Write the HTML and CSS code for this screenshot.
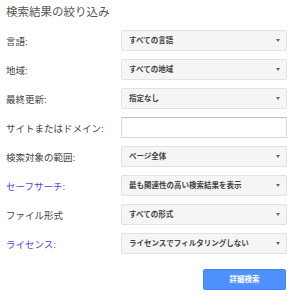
FILE: index.html
```html
<html>
<head>
<meta charset="utf-8">
<link rel="stylesheet" href="styles.css">
<title>検索結果の絞り込み</title>
</head>
<body>
<div class=panel>
<div class=title>検索結果の絞り込み</div>
<div class=rows>
<div class=row><div class=lbl>言語:</div><div class=sel>すべての言語<span class=arr></span></div></div>
<div class=row><div class=lbl>地域:</div><div class=sel>すべての地域<span class=arr></span></div></div>
<div class=row><div class=lbl>最終更新:</div><div class=sel>指定なし<span class=arr></span></div></div>
<div class=row><div class=lbl>サイトまたはドメイン:</div><div class=inp></div></div>
<div class=row><div class=lbl>検索対象の範囲:</div><div class=sel>ページ全体<span class=arr></span></div></div>
<div class=row><div class="lbl link">セーフサーチ:</div><div class=sel>最も関連性の高い検索結果を表示<span class=arr></span></div></div>
<div class=row><div class=lbl>ファイル形式</div><div class=sel>すべての形式<span class=arr></span></div></div>
<div class=row><div class="lbl link">ライセンス:</div><div class=sel>ライセンスでフィルタリングしない<span class=arr></span></div></div>
</div>
<div class=foot><div class=btn>詳細検索</div></div>
</div>
</body>
</html>
```

FILE: styles.css
```css
html,body{margin:0;background:#fff}
body{font-family:Arial,"Liberation Sans","Noto Sans CJK JP",sans-serif;color:#444}
.panel{padding:6px 12px 0 6px}
.title{font-size:11.5px;color:#555;height:24px;line-height:13px}
.rows{display:flex;flex-direction:column;gap:8px}
.row{display:flex;align-items:center;height:21px}
.lbl{flex:none;width:115px;font-size:9.5px;color:#444}
.link{color:#4646e6}
.sel{flex:none;position:relative;box-sizing:border-box;width:166px;height:21px;padding-left:7px;line-height:19px;
background:#f5f5f5;border:1px solid #e2e2e2;border-radius:2px;font-size:7.5px;font-weight:bold;color:#444;white-space:nowrap}
.arr{position:absolute;right:6px;top:8px;border-left:2.5px solid transparent;border-right:2.5px solid transparent;border-top:3px solid #666}
.inp{flex:none;box-sizing:border-box;width:166px;height:21px;border:1px solid #d9d9d9;border-top-color:#c0c0c0;background:#fff}
.foot{display:flex;justify-content:flex-end;padding-top:15px}
.btn{box-sizing:border-box;width:83px;height:21px;margin-right:1px;background:#4d90fe;border:1px solid #3f85f5;border-radius:2px;
color:#fff;font-size:7.5px;font-weight:bold;text-align:center;line-height:19px}
```
